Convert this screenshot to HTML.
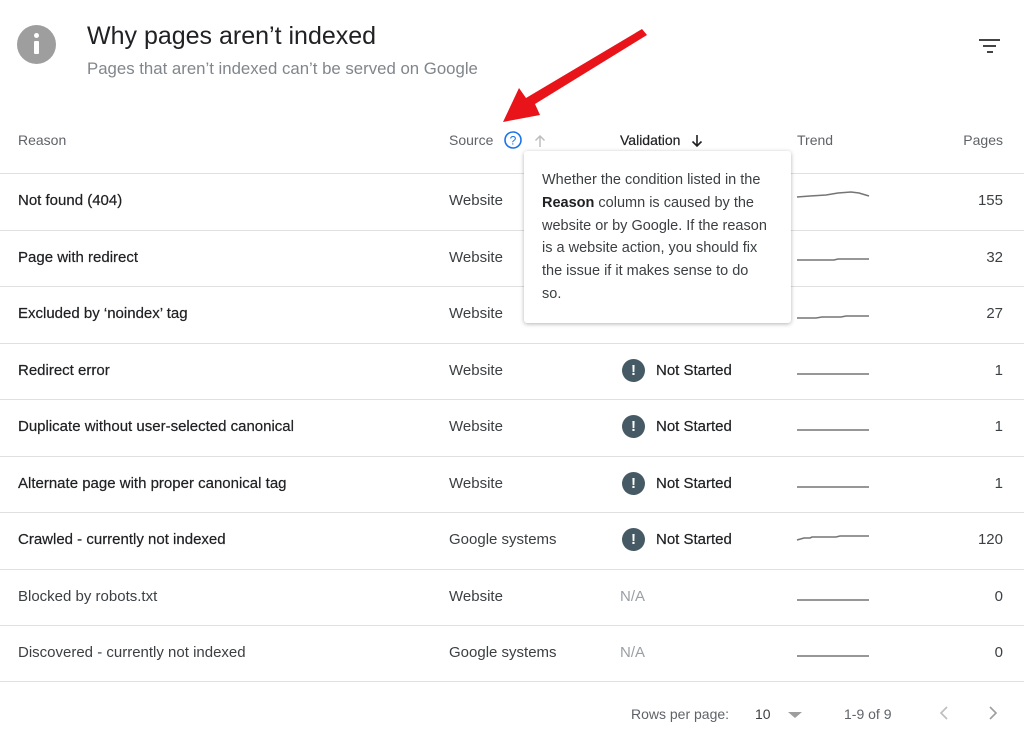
<!DOCTYPE html>
<html><head><meta charset="utf-8"><style>
*{margin:0;padding:0;box-sizing:border-box}
body{width:1024px;height:736px;background:#fff;font-family:"Liberation Sans",sans-serif;position:relative;overflow:hidden;color:#202124}
.a{position:absolute;white-space:nowrap}
.hd{font-size:14px;color:#5f6368;top:132px}
.row{position:absolute;left:0;width:1024px;height:57px}
.row .t{position:absolute;top:-1px;line-height:57px;font-size:15px;white-space:nowrap}
.b{color:#202124;-webkit-text-stroke:0.2px #202124}
.n{color:#3c4043}
.src{left:449px;color:#3c4043}
.pg{right:21px;color:#3c4043}
.line{position:absolute;left:0;width:1024px;height:1px;background:#e0e0e0}
.ic{position:absolute;left:622px;top:16px;width:23px;height:23px;border-radius:50%;background:#455a64;color:#fff;font-weight:bold;font-size:15px;line-height:23px;text-align:center}
.ns{left:656px}
svg.tr{position:absolute;left:796px;top:18px}
</style></head><body>
<div class="a" style="left:17px;top:25px;width:39px;height:39px;border-radius:50%;background:#9e9e9e"></div>
<div class="a" style="left:34px;top:33px;width:5px;height:5px;border-radius:50%;background:#fff"></div>
<div class="a" style="left:34px;top:41px;width:5px;height:13px;border-radius:1px;background:#fff"></div>
<div class="a" style="left:87px;top:22px;font-size:25px;color:#202124">Why pages aren’t indexed</div>
<div class="a" style="left:87px;top:59px;font-size:16.8px;color:#80868b">Pages that aren’t indexed can’t be served on Google</div>
<div class="a" style="left:979px;top:39px;width:21px;height:2px;background:#444"></div>
<div class="a" style="left:983px;top:45px;width:13px;height:2px;background:#444"></div>
<div class="a" style="left:987px;top:51px;width:6px;height:2px;background:#444"></div>

<div class="a hd" style="left:18px">Reason</div>
<div class="a hd" style="left:449px">Source</div>
<svg class="a" style="left:503px;top:130px" width="20" height="20"><circle cx="10" cy="10" r="8" fill="none" stroke="#1a73e8" stroke-width="1.6"/><text x="10" y="14.5" font-size="12" text-anchor="middle" fill="#1a73e8" font-family="Liberation Sans">?</text></svg>
<svg class="a" style="left:532px;top:133px" width="16" height="16"><path d="M8 14V3M3.5 7.5L8 3l4.5 4.5" fill="none" stroke="#bdbdbd" stroke-width="1.5"/></svg>
<div class="a hd" style="left:620px;color:#202124;-webkit-text-stroke:0.2px #202124">Validation</div>
<svg class="a" style="left:689px;top:133px" width="16" height="16"><path d="M8 2v11M3.5 8.5L8 13l4.5-4.5" fill="none" stroke="#202124" stroke-width="1.6"/></svg>
<div class="a hd" style="left:797px">Trend</div>
<div class="a hd" style="right:21px">Pages</div>

<div class="line" style="top:173px"></div>
<div class="row" style="top:173px"><div class="t b" style="left:18px">Not found (404)</div><div class="t src">Website</div><svg class="tr" width="74" height="20"><path d="M1 6L14 5L30 4L42 2L55 1L63 2L73 5" fill="none" stroke="#757575" stroke-width="1.6"/></svg><div class="t pg">155</div></div>
<div class="line" style="top:230px"></div>
<div class="row" style="top:230px"><div class="t b" style="left:18px">Page with redirect</div><div class="t src">Website</div><svg class="tr" width="74" height="20"><path d="M1 12L38 12L42 11L73 11" fill="none" stroke="#757575" stroke-width="1.6"/></svg><div class="t pg">32</div></div>
<div class="line" style="top:286px"></div>
<div class="row" style="top:286px"><div class="t b" style="left:18px">Excluded by ‘noindex’ tag</div><div class="t src">Website</div><svg class="tr" width="74" height="20"><path d="M1 14L20 14L26 13L45 13L50 12L73 12" fill="none" stroke="#757575" stroke-width="1.6"/></svg><div class="t pg">27</div></div>
<div class="line" style="top:343px"></div>
<div class="row" style="top:343px"><div class="t b" style="left:18px">Redirect error</div><div class="t src">Website</div><div class="ic">!</div><div class="t b ns">Not Started</div><svg class="tr" width="74" height="20"><path d="M1 13H73" stroke="#757575" stroke-width="1.6"/></svg><div class="t pg">1</div></div>
<div class="line" style="top:399px"></div>
<div class="row" style="top:399px"><div class="t b" style="left:18px">Duplicate without user-selected canonical</div><div class="t src">Website</div><div class="ic">!</div><div class="t b ns">Not Started</div><svg class="tr" width="74" height="20"><path d="M1 13H73" stroke="#757575" stroke-width="1.6"/></svg><div class="t pg">1</div></div>
<div class="line" style="top:456px"></div>
<div class="row" style="top:456px"><div class="t b" style="left:18px">Alternate page with proper canonical tag</div><div class="t src">Website</div><div class="ic">!</div><div class="t b ns">Not Started</div><svg class="tr" width="74" height="20"><path d="M1 13H73" stroke="#757575" stroke-width="1.6"/></svg><div class="t pg">1</div></div>
<div class="line" style="top:512px"></div>
<div class="row" style="top:512px"><div class="t b" style="left:18px">Crawled - currently not indexed</div><div class="t src">Google systems</div><div class="ic">!</div><div class="t b ns">Not Started</div><svg class="tr" width="74" height="20"><path d="M1 10L8 8L14 8L16 7L40 7L44 6L73 6" fill="none" stroke="#757575" stroke-width="1.6"/></svg><div class="t pg">120</div></div>
<div class="line" style="top:569px"></div>
<div class="row" style="top:569px"><div class="t n" style="left:18px">Blocked by robots.txt</div><div class="t src">Website</div><div class="t ns" style="left:620px;color:#9aa0a6">N/A</div><svg class="tr" width="74" height="20"><path d="M1 13H73" stroke="#757575" stroke-width="1.6"/></svg><div class="t pg">0</div></div>
<div class="line" style="top:625px"></div>
<div class="row" style="top:625px"><div class="t n" style="left:18px">Discovered - currently not indexed</div><div class="t src">Google systems</div><div class="t ns" style="left:620px;color:#9aa0a6">N/A</div><svg class="tr" width="74" height="20"><path d="M1 13H73" stroke="#757575" stroke-width="1.6"/></svg><div class="t pg">0</div></div>
<div class="line" style="top:681px"></div>

<div class="a" style="left:631px;top:706px;font-size:14px;color:#5f6368">Rows per page:</div>
<div class="a" style="left:755px;top:706px;font-size:14px;color:#3c4043">10</div>
<svg class="a" style="left:787px;top:710px" width="16" height="10"><path d="M1 2h14L8 8z" fill="#9e9e9e"/></svg>
<div class="a" style="left:844px;top:706px;font-size:14px;color:#5f6368">1-9 of 9</div>
<svg class="a" style="left:936px;top:704px" width="16" height="18"><path d="M11 3L5 9l6 6" fill="none" stroke="#bdbdbd" stroke-width="1.6"/></svg>
<svg class="a" style="left:985px;top:704px" width="16" height="18"><path d="M5 3l6 6-6 6" fill="none" stroke="#9e9e9e" stroke-width="1.6"/></svg>

<div class="a" style="left:524px;top:151px;width:267px;height:172px;background:#fff;border-radius:3px;box-shadow:0 1px 4px rgba(0,0,0,.3);padding:18px 0 0 18px;font-size:14.5px;line-height:22.8px;color:#3c4043;white-space:normal">Whether the condition listed in the<br><b style="color:#202124">Reason</b> column is caused by the<br>website or by Google. If the reason<br>is a website action, you should fix<br>the issue if it makes sense to do<br>so.</div>

<svg class="a" style="left:0;top:0" width="1024" height="200"><path d="M642 29L647 35L535 104L540 115L503 122L519 88L526 98Z" fill="#e8141a"/></svg>
</body></html>
